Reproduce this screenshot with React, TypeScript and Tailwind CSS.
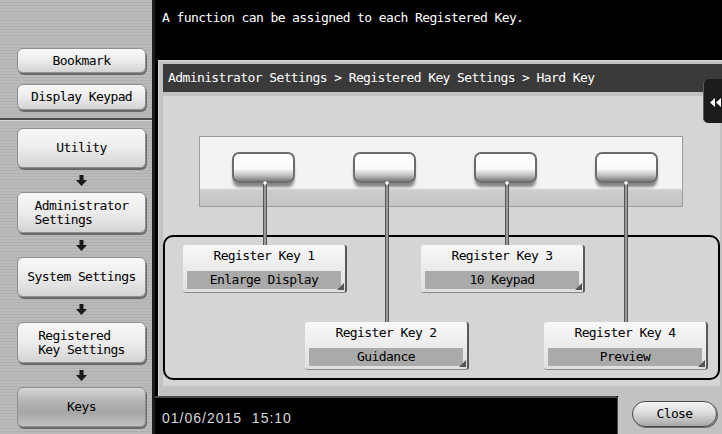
import React from 'react';

const mono = "font-['DejaVu_Sans_Mono',monospace] text-[13px] tracking-[-0.6px]";

const SideBtn: React.FC<{ children: React.ReactNode; className?: string; active?: boolean }> = ({ children, className = '', active }) => (
  <div
    className={`flex items-center justify-center text-center leading-[14px] text-black rounded-[6px] border border-[#8f8f8f] shadow-[1px_2px_0_0_#6a6a6a] ${
      active
        ? 'bg-[linear-gradient(to_bottom,#d6d6d6_0%,#b4b4b4_35%,#a6a6a6_65%,#c2c2c2_100%)]'
        : 'bg-[linear-gradient(to_bottom,#f8f8f8_0%,#ececec_50%,#d4d4d4_100%)]'
    } ${className}`}
  >
    {children}
  </div>
);

const DownArrow: React.FC<{ className?: string }> = ({ className = 'h-[24px]' }) => (
  <div className={`flex items-center justify-center ${className}`}>
    <svg width="11" height="11" viewBox="0 0 11 11">
      <path d="M3.5 0h4v5h3.5L5.5 11 0 5h3.5z" fill="#1a1a1a" />
    </svg>
  </div>
);

const HardKey: React.FC = () => (
  <div className="w-[63px] h-[40px]">
    <div className="h-[31px] rounded-[7px] border-2 border-[#6c6c6c] bg-[linear-gradient(to_bottom,#ffffff_0%,#fafafa_55%,#bdbdbd_80%,#7c7c7c_100%)] shadow-[0_5px_3px_-1px_rgba(0,0,0,0.45)]" />
  </div>
);

const RegKey: React.FC<{ label: string; value: string }> = ({ label, value }) => (
  <div className="relative w-[164px] h-[48px] rounded-[3px] border-r-2 border-b border-r-[#5a5a5a] border-b-[#8a8a8a] bg-[linear-gradient(to_bottom,#f8f8f8,#dfdfdf)] px-[4px] pt-[3px] flex flex-col">
    <div className="h-[16px] flex items-center justify-center text-black">{label}</div>
    <div className="mt-[7px] h-[18px] bg-[#aaaaaa] flex items-center justify-center text-black">{value}</div>
    <div className="absolute right-[1px] bottom-[2px] w-0 h-0 border-l-[7px] border-l-transparent border-b-[7px] border-b-[#555555]" />
  </div>
);

export default function App() {
  return (
    <div className={`w-[722px] h-[434px] flex overflow-hidden bg-black ${mono}`}>
      {/* sidebar */}
      <div className="w-[155px] h-full flex flex-col border-r-[3px] border-[#1c1c1c] bg-[repeating-linear-gradient(to_bottom,#bababa_0px,#bababa_2px,#b0b0b0_2px,#b0b0b0_3px)]">
        <div className="h-[118px] pt-[48px] pl-[17px] pr-[6px] flex flex-col gap-[11px]">
          <SideBtn className="h-[25px]">Bookmark</SideBtn>
          <SideBtn className="h-[26px]">Display Keypad</SideBtn>
        </div>
        <div className="h-[3px] bg-[#4e4e4e] border-b border-[#d2d2d2]" />
        <div className="flex flex-col pl-[17px] pr-[6px] pt-[7px]">
          <SideBtn className="h-[40px]">Utility</SideBtn>
          <DownArrow />
          <SideBtn className="h-[41px]">
            <span className="text-left">Administrator<br />Settings</span>
          </SideBtn>
          <DownArrow />
          <SideBtn className="h-[40px]">System Settings</SideBtn>
          <DownArrow className="h-[25px]" />
          <SideBtn className="h-[41px]">
            <span className="text-left">Registered<br />Key Settings</span>
          </SideBtn>
          <DownArrow />
          <SideBtn className="h-[40px]" active>Keys</SideBtn>
        </div>
      </div>

      {/* main */}
      <div className="flex-1 flex flex-col">
        <div className="h-[60px] pt-[10px] pl-[7px] text-white leading-[16px]">
          A function can be assigned to each Registered Key.
        </div>

        <div className="relative ml-[3px] h-[336px] border-t border-l border-[#d6d6d6] bg-[#c2c2c2] pl-[4px] pt-[3px] pb-[10px] flex flex-col">
          <div className="h-[28px] bg-[#3a3a3a] text-white flex items-center pl-[5px]">
            Administrator Settings &gt; Registered Key Settings &gt; Hard Key
          </div>

          <div className="relative mt-[4px] mr-[2px] h-[290px] bg-[#d5d5d5] pt-[40px]">
            <div className="ml-[36px] w-[484px] h-[71px] border border-[#9c9c9c] bg-[linear-gradient(to_bottom,#f3f3f3_0%,#f3f3f3_74%,#cdcdcd_77%,#c4c4c4_100%)] pt-[15px] pl-[32px] flex gap-[58px]">
              <HardKey />
              <HardKey />
              <HardKey />
              <HardKey />
            </div>

            <div className="mt-[28px] h-[145px] border-2 border-black rounded-[10px] pt-[8px]">
              <div className="flex pl-[18px] gap-[74px]">
                <RegKey label="Register Key 1" value="Enlarge Display" />
                <RegKey label="Register Key 3" value="10 Keypad" />
              </div>
              <div className="flex pl-[140px] gap-[75px] mt-[29px]">
                <RegKey label="Register Key 2" value="Guidance" />
                <RegKey label="Register Key 4" value="Preview" />
              </div>
            </div>

            {/* connector lines */}
            <svg className="absolute inset-0 pointer-events-none" width="555" height="290">
              {[
                [102, 149],
                [224, 226],
                [344, 149],
                [463, 226],
              ].map(([x, y2]) => (
                <g key={x}>
                  <line x1={x} y1={87} x2={x} y2={y2} stroke="#555555" strokeWidth="4" />
                  <line x1={x} y1={87} x2={x} y2={y2} stroke="#c9c9c9" strokeWidth="1.2" />
                  <circle cx={x} cy={87} r="1.8" fill="#ffffff" />
                </g>
              ))}
            </svg>
          </div>

          {/* side tab */}
          <div className="absolute right-0 top-[18px] w-[19px] h-[44px] rounded-l-[5px] bg-[#1c1c1c] border-l border-[#5c5c5c] overflow-hidden">
            <svg className="absolute left-[6px] top-[19px]" width="14" height="9" viewBox="0 0 14 9">
              <path d="M0 4.5L5 0v9zM6 4.5L11 0v9z" fill="#ffffff" />
            </svg>
          </div>
        </div>

        <div className="h-[38px] flex">
          <div className="flex-1 bg-black border-t-2 border-r border-[#4a4a4a] rounded-tr-[3px] pl-[7px] pt-[10px] font-['Liberation_Sans',Arial,sans-serif] text-[14px] tracking-[1px] text-[#d8d8d8]">
            01/06/2015&nbsp;&nbsp;15:10
          </div>
          <div className="w-[104px] bg-[#c2c2c2] pl-[14px] pt-[5px]">
            <div className="w-[85px] h-[26px] rounded-full border border-[#4a4a4a] bg-[linear-gradient(to_bottom,#f4f4f4_0%,#dcdcdc_45%,#a8a8a8_100%)] shadow-[1px_1px_0_#6a6a6a] flex items-center justify-center text-black">
              Close
            </div>
          </div>
        </div>
      </div>
    </div>
  );
}
